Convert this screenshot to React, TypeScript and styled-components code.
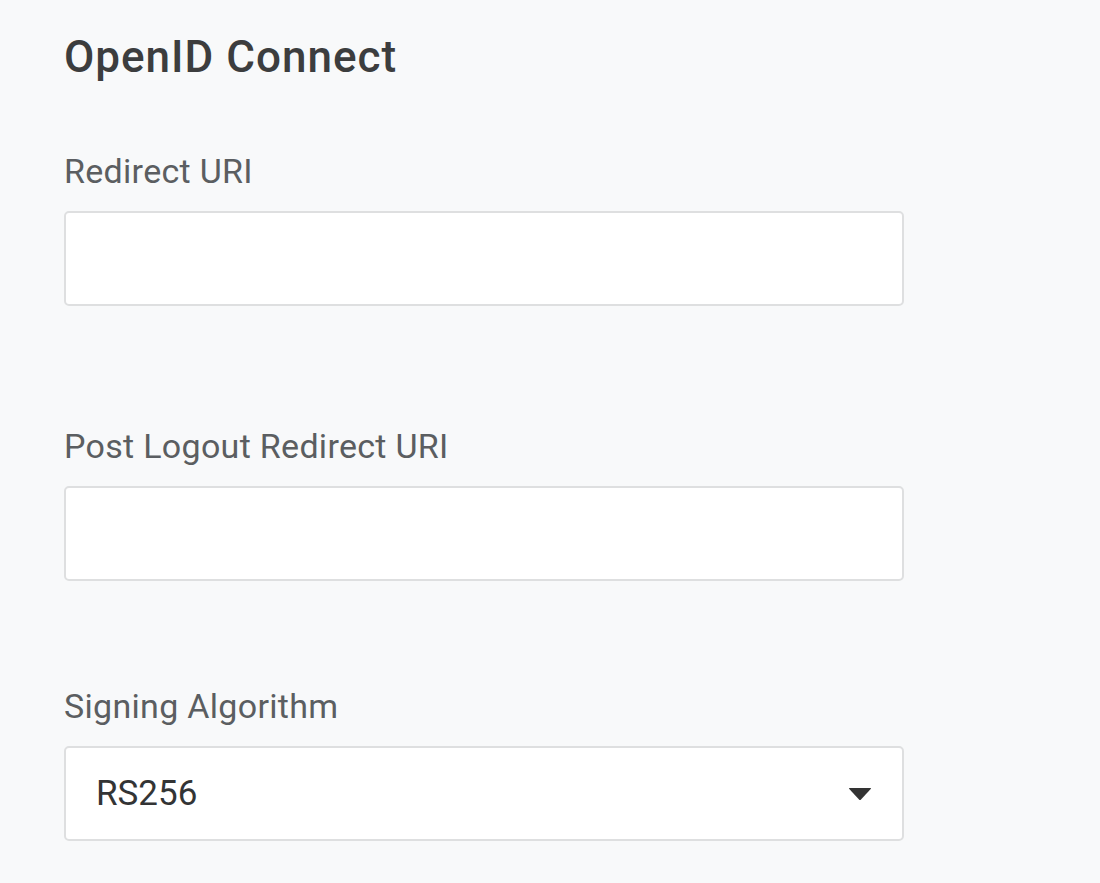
import styled, { createGlobalStyle } from 'styled-components';

const GlobalStyle = createGlobalStyle`
  html, body {
    margin: 0;
    padding: 0;
    background: #f8f9fa;
    font-family: Roboto, "Liberation Sans", sans-serif;
  }
`;

const Page = styled.div`
  min-height: 883px;
  padding: 34px 64px 0;
  box-sizing: border-box;
  background: #f8f9fa;
`;

const Title = styled.h2`
  margin: 0 0 70px;
  font-size: 44px;
  font-weight: 500;
  letter-spacing: 1px;
  line-height: 47px;
  color: #3c3d3e;
`;

const Field = styled.div<{ $gap: number }>`
  display: flex;
  flex-direction: column;
  width: 840px;
  margin-bottom: ${(p) => p.$gap}px;
`;

const Label = styled.label`
  font-size: 34px;
  line-height: 38px;
  color: #5b5e61;
  letter-spacing: 0.3px;
  padding-top: 1px;
  margin-bottom: 21px;
`;

const Input = styled.input`
  box-sizing: border-box;
  height: 95px;
  width: 100%;
  border: 2px solid #dedfe0;
  border-radius: 5px;
  background: #fff;
  font-family: inherit;
  font-size: 35px;
  padding: 0 30px;
  outline: none;
`;

const Select = styled.div`
  box-sizing: border-box;
  height: 95px;
  width: 100%;
  border: 2px solid #dedfe0;
  border-radius: 5px;
  background: #fff;
  display: flex;
  align-items: center;
  justify-content: space-between;
  padding: 0 30px 0 30px;
  font-size: 35px;
  color: #333435;
`;

const Arrow = () => (
  <svg width="24" height="14" viewBox="0 0 24 14">
    <path d="M1.5 1 L22.5 1 Q23.5 1 22.7 2 L13 12.5 Q12 13.5 11 12.5 L1.3 2 Q0.5 1 1.5 1 Z" fill="#333" />
  </svg>
);

export default function App() {
  return (
    <>
      <GlobalStyle />
      <Page>
        <Title>OpenID Connect</Title>
        <Field $gap={120}>
          <Label>Redirect URI</Label>
          <Input />
        </Field>
        <Field $gap={105}>
          <Label>Post Logout Redirect URI</Label>
          <Input />
        </Field>
        <Field $gap={0}>
          <Label>Signing Algorithm</Label>
          <Select>
            <span>RS256</span>
            <Arrow />
          </Select>
        </Field>
      </Page>
    </>
  );
}
